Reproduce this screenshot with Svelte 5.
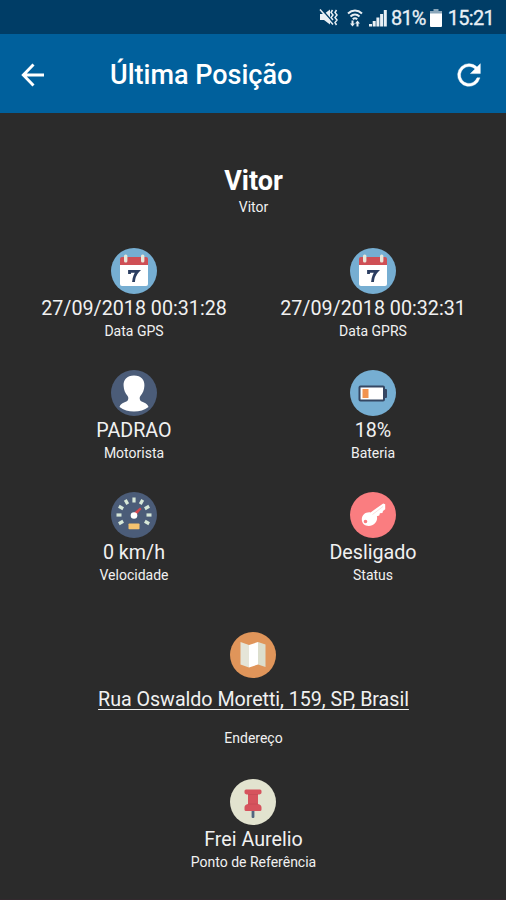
<script lang="ts">
  const items = [
    { icon: 'calendar', value: '27/09/2018 00:31:28', label: 'Data GPS' },
    { icon: 'calendar', value: '27/09/2018 00:32:31', label: 'Data GPRS' },
    { icon: 'driver', value: 'PADRAO', label: 'Motorista' },
    { icon: 'battery', value: '18%', label: 'Bateria' },
    { icon: 'speed', value: '0 km/h', label: 'Velocidade' },
    { icon: 'key', value: 'Desligado', label: 'Status' }
  ]

  const ticks = [-120, -90, -60, -30, 0, 30, 60, 90, 120]
</script>

{#snippet icon(name: string)}
  <svg class="icon" viewBox="0 0 46 46">
    {#if name === 'calendar'}
      <circle cx="23" cy="23" r="23" fill="#76aed2" />
      <path d="M9 16h28v20a2 2 0 0 1-2 2H11a2 2 0 0 1-2-2z" fill="#fff" />
      <path d="M9 17v-6a2 2 0 0 1 2-2h24a2 2 0 0 1 2 2v6z" fill="#cf4f55" />
      <rect x="13" y="6.500" width="3.400" height="8" rx="1.500" fill="#e9e7da" />
      <rect x="30" y="6.500" width="3.400" height="8" rx="1.500" fill="#e9e7da" />
      <path d="M18.500 26v-2.700h8.300c-2.600 2.800-4 6-4.300 10.700" fill="none" stroke="#2b3d60" stroke-width="2.800" />
    {:else if name === 'driver'}
      <circle cx="23" cy="23" r="23" fill="#4b5c78" />
      <path
        d="M23 5.500c7.200 0 10.800 4.500 10.400 10.300-.2 4.200-1.600 7.600-4 10.200-1.200 1.600-.9 4.200.7 5.200 3 1.500 6.300 2.200 7.400 5.800C33.500 40 28.500 41.500 23 41.500S12.500 40 8.500 37c1.100-3.600 4.400-4.300 7.400-5.800 1.600-1 1.900-3.600.7-5.200-2.400-2.600-3.800-6-4-10.200C12.200 10 15.800 5.500 23 5.500z"
        fill="#fff"
      />
    {:else if name === 'battery'}
      <circle cx="23" cy="23" r="23" fill="#76aed2" />
      <rect x="33" y="19" width="4" height="9" rx="1" fill="#354763" />
      <rect x="9.500" y="16.500" width="24.500" height="14" rx="1" fill="#fff" stroke="#354763" stroke-width="2" />
      <rect x="12.500" y="19" width="6" height="9" fill="#f2934f" />
    {:else if name === 'speed'}
      <circle cx="23" cy="23" r="23" fill="#4b5c78" />
      {#each ticks as angle}
        <rect x="21.400" y="5.500" width="3.200" height="5" fill="#d8e8d8" transform="rotate({angle} 23 23)" />
      {/each}
      <path d="M21.500 22l7.500-6.500 1.500 1.500-6.500 7.500z" fill="#d8474e" />
      <circle cx="23" cy="23.500" r="3.300" fill="#fff" />
      <rect x="17.500" y="31.500" width="11" height="5.800" rx=".8" fill="#f4c26f" />
    {:else if name === 'key'}
      <circle cx="23" cy="23" r="23" fill="#fa7d80" />
      <path
        fill-rule="evenodd"
        d="M33.200 11.500l2 .8v4.900l-2.200 1.700-.6 2-2.500.3-.6 2.200-2.400.9c1.200 4.700-2.600 9.700-8.200 9.700-4 0-6.900-2.800-6.900-6.500 0-4.900 4.200-7.800 8.700-7.100zM15.500 27.700a1.800 1.800 0 1 0 0 3.600 1.800 1.800 0 0 0 0-3.600z"
        fill="#fff"
      />
      <path d="M22.500 22.500L33 14.500" stroke="#f9d5d6" stroke-width=".8" />
    {:else if name === 'map'}
      <circle cx="23" cy="23" r="23" fill="#e0955a" />
      <path d="M10.500 10l8.500 3v22.500l-8.500-3z" fill="#e5e5d8" />
      <path d="M19 13l9-3v22.500l-9 3z" fill="#fff" />
      <path d="M28 10l7.500 2.500v22.500L28 32.500z" fill="#dcdecd" />
    {:else if name === 'pin'}
      <circle cx="23" cy="23" r="23" fill="#e2e3cf" />
      <rect x="21.600" y="29" width="2.800" height="10" rx="1" fill="#526580" />
      <path
        d="M16 10.500h14a1.500 1.500 0 0 1 1.500 1.500v1.500c0 1.400-1.500 2-3.500 2v9.500c2.300.5 3.500 1.800 3.500 3.500v2a1.500 1.500 0 0 1-1.500 1.500H16a1.500 1.500 0 0 1-1.500-1.500v-2c0-1.700 1.200-3 3.500-3.500v-9.500c-2 0-3.500-.6-3.500-2V12a1.500 1.500 0 0 1 1.500-1.500z"
        fill="#d6535d"
      />
      <path d="M18 15.500h10M18 25h10" stroke="#c54c56" stroke-width=".8" />
    {/if}
  </svg>
{/snippet}

<div class="screen">
  <div class="status">
    <svg class="mute" width="20" height="20" viewBox="0 0 20 20">
      <path d="M1 6h4l6-4.500v15L5 12H1z" fill="#e9f0f5" />
      <path d="M2.500 1l13 15" stroke="#003d66" stroke-width="1.500" />
      <path d="M1 1.500l13 15" stroke="#e9f0f5" stroke-width="1.500" />
      <path d="M13.500 2l-1.500 2.500 2 2.500-2 2.500 2 2.500M17.500 2L16 4.500l2 2.500-2 2.500 2 2.500-2 2.500 1.500 2.500" fill="none" stroke="#e9f0f5" stroke-width="1.500" />
    </svg>
    <svg class="wifi" width="16" height="18" viewBox="0 0 16 18">
      <path d="M1 4.500c4.200-4 9.800-4 14 0M3.500 7.500c2.700-2.600 6.300-2.600 9 0M5.800 10.200c1.400-1.300 3-1.300 4.400 0" fill="none" stroke="#e9f0f5" stroke-width="2" />
      <path d="M4.500 11.500v3H3l2.500 3 2.500-3H6.500v-3zM9.500 17.500v-3H8l2.500-3 2.500 3h-1.500v3z" fill="#e9f0f5" />
    </svg>
    <svg class="signal" width="18" height="18" viewBox="0 0 18 18">
      <path d="M0 15h3v2.500H0zM3.700 12h3v5.500h-3zM7.400 8.500h3v9h-3zM11.100 5h3v12.500h-3zM14.800 1h3v16.500h-3z" fill="#e9f0f5" />
    </svg>
    <span class="percent">81%</span>
    <svg class="charge" width="12" height="18" viewBox="0 0 12 18">
      <path d="M3.500 0h5v2H12v3H0V2h3.500z" fill="#8aa6ba" />
      <path d="M0 4.500h12V17a1 1 0 0 1-1 1H1a1 1 0 0 1-1-1z" fill="#fff" />
    </svg>
    <span class="time">15:21</span>
  </div>

  <header>
    <svg class="back" width="24" height="24" viewBox="0 0 24 24">
      <path d="M23 12H2.500M12.500 1.500L2.300 12l10.200 10.500" fill="none" stroke="#fff" stroke-width="2.900" />
    </svg>
    <h1>Última Posição</h1>
    <svg class="refresh" width="34" height="34" viewBox="0 0 24 24">
      <path d="M17.650 6.350A7.960 7.960 0 0 0 12 4a8 8 0 1 0 7.730 10h-2.080A6 6 0 1 1 12 6c1.660 0 3.140.69 4.220 1.780L13 11h7V4z" fill="#fff" stroke="#fff" stroke-width=".3" />
    </svg>
  </header>

  <main>
    <div class="name">Vitor</div>
    <div class="label">Vitor</div>

    <div class="grid">
      {#each items as item}
        <div class="item">
          {@render icon(item.icon)}
          <div class="value">{item.value}</div>
          <div class="label">{item.label}</div>
        </div>
      {/each}
    </div>

    <div class="item address">
      {@render icon('map')}
      <div class="value">Rua Oswaldo Moretti, 159, SP, Brasil</div>
      <div class="label">Endereço</div>
    </div>

    <div class="item">
      {@render icon('pin')}
      <div class="value">Frei Aurelio</div>
      <div class="label">Ponto de Referência</div>
    </div>
  </main>
</div>

<style>
  :global(body) {
    background: #2b2b2b;
  }

  .screen {
    height: 900px;
    box-sizing: border-box;
    overflow: hidden;
    display: flex;
    flex-direction: column;
    background: #2b2b2b;
    border-bottom: 1px solid #33292e;
    color: #f1f1f1;
    font-family: Roboto, sans-serif;
  }

  .status {
    height: 34px;
    flex: none;
    display: flex;
    align-items: center;
    justify-content: flex-end;
    box-sizing: border-box;
    padding: 2px 12px 0 0;
    background: #003d66;
    color: #e9f0f5;
    font-size: 20px;
  }

  .wifi {
    margin-left: 8px;
  }

  .signal {
    margin-left: 6px;
  }

  .percent {
    margin-left: 4px;
    letter-spacing: -0.8px;
    -webkit-text-stroke: 0.3px #e9f0f5;
  }

  .charge {
    margin-left: 4px;
  }

  .time {
    margin-left: 6px;
    letter-spacing: -0.7px;
    -webkit-text-stroke: 0.3px #e9f0f5;
  }

  header {
    height: 79px;
    flex: none;
    display: flex;
    align-items: center;
    box-sizing: border-box;
    padding: 3px 20px 0 21px;
    background: #00609c;
  }

  h1 {
    flex: 1;
    margin: 0 0 0 65px;
    color: #fff;
    font-size: 27px;
    font-weight: 500;
    line-height: 32px;
  }

  main {
    display: flex;
    flex-direction: column;
    align-items: center;
    padding: 52px 0 0 1px;
  }

  .name {
    color: #fff;
    font-size: 27px;
    font-weight: 700;
    line-height: 32px;
  }

  .label {
    font-size: 14px;
    line-height: 20px;
    white-space: nowrap;
  }

  .grid {
    display: grid;
    grid-template-columns: 239px 239px;
    row-gap: 29px;
    margin-top: 31px;
  }

  .item {
    display: flex;
    flex-direction: column;
    align-items: center;
  }

  .icon {
    width: 46px;
    height: 46px;
  }

  .value {
    margin-top: 2px;
    font-size: 19.7px;
    line-height: 25px;
    white-space: nowrap;
  }

  .address {
    margin: 47px 0 31px;
  }

  .address .value {
    margin: 9px 0 16px;
    letter-spacing: -0.04px;
    text-decoration: underline;
    text-decoration-thickness: 1px;
    text-underline-offset: 3px;
    text-decoration-skip-ink: none;
  }
</style>
